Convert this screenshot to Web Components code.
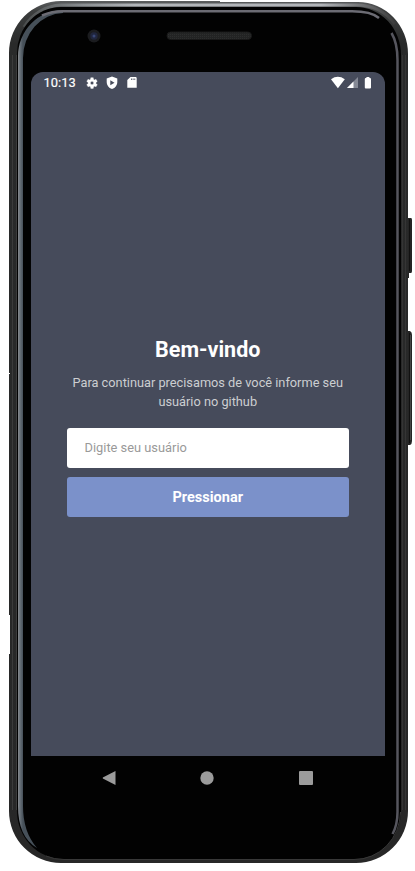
<!DOCTYPE html>
<html lang="pt-BR">
<head>
<meta charset="utf-8">
<title>Bem-vindo</title>
<style>
html,body{margin:0;padding:0;background:#fff;width:415px;height:871px;overflow:hidden}
body{font-family:Roboto,"Noto Sans",sans-serif}
</style>
</head>
<body>
<phone-frame>
  <status-bar slot="screen" time="10:13"></status-bar>
  <welcome-form slot="screen">
    <span slot="title">Bem-vindo</span>
    <span slot="text">Para continuar precisamos de você informe seu<br>usuário no github</span>
    <text-field slot="fields" placeholder="Digite seu usuário"></text-field>
    <action-button slot="fields">Pressionar</action-button>
  </welcome-form>
  <nav-bar slot="nav"></nav-bar>
</phone-frame>
<script>
const define = (name, html, init) => customElements.define(name, class extends HTMLElement {
  constructor() {
    super();
    this.attachShadow({mode: 'open'}).innerHTML = html;
  }
  connectedCallback() { if (init) init(this); }
});

define('phone-frame', `
<style>
:host{display:block;position:relative;width:415px;height:871px}
.shell{position:absolute;left:0;top:0;display:block}
.front{position:relative;display:grid;grid-template-rows:684px 44px;box-sizing:border-box;width:415px;height:871px;padding:72px 30px 0 31px}
.screen{display:flex;flex-direction:column;background:#464b5b;border-radius:12px 12px 0 0;overflow:hidden}
</style>
<svg class="shell" width="415" height="871" viewBox="0 0 415 871">
  <defs>
    <linearGradient id="edge" x1="0" y1="0" x2="0" y2="1">
      <stop offset="0" stop-color="#5c5e5f"/><stop offset=".012" stop-color="#3c3e3e"/><stop offset=".05" stop-color="#292a2a"/><stop offset="1" stop-color="#272727"/>
    </linearGradient>
    <linearGradient id="topshine" x1="0" y1="0" x2="1" y2="0">
      <stop offset="0" stop-color="#4a4d4d"/><stop offset=".16" stop-color="#8b8f92"/><stop offset=".3" stop-color="#b2b5b9"/><stop offset=".8" stop-color="#b2b5b9"/><stop offset="1" stop-color="#3c3c3c"/>
    </linearGradient>
    <linearGradient id="leftshine" x1="18" x2="23" y1="0" y2="0" gradientUnits="userSpaceOnUse">
      <stop offset="0" stop-color="#85888c"/><stop offset=".4" stop-color="#69727a"/><stop offset="1" stop-color="#465059"/>
    </linearGradient>
    <pattern id="mesh" width="2" height="2" patternUnits="userSpaceOnUse"><rect width="2" height="2" fill="#232424"/><rect width="1" height="1" fill="#2d2e2e"/></pattern>
  </defs>
  <path d="M406 218h5q1 0 1 2v51q0 2-1 2h-2v5h-3z" fill="#252525"/>
  <path d="M406 331h4q2 1 2 4v106q0 3-2 4h-4z" fill="#252525"/>
  <path d="M410.500 335v105" stroke="#474747"/>
  <path d="M409.500 219v52M409.500 333v110" stroke="#111"/>
  <path d="M61 1H220V2H358A50 52 0 0 1 408 54V811A52 52 0 0 1 356 863H61A52 52 0 0 1 9 811V53A52 52 0 0 1 61 1Z" fill="url(#edge)"/>
  <path d="M9 373h1v1H9zM9 615h1v39H9z" fill="#fff"/>
  <path d="M12.500 55V810M16.500 55V810" stroke="#3b3b3b" fill="none"/>
  <path d="M402.500 55V810M405.500 55V810" stroke="#353535" fill="none"/>
  <path d="M24 27A46 47 0 0 1 61 5H356Q381 5 395 24" fill="none" stroke="url(#topshine)" stroke-width="3"/>
  <path d="M61 7H356A45 48 0 0 1 401 55V811A46 48 0 0 1 355 859H63A46 48 0 0 1 17 811V53A44 46 0 0 1 61 7Z" fill="#020202"/>
  <path d="M18 56A45 46 0 0 1 63 10V13A41 45 0 0 0 23 58V806Q23 832 37 848Q18 837 18 806Z" fill="url(#leftshine)"/>
  <path d="M42 15.500Q52 11.250 63 11.250H352Q371 11.250 379 18" fill="none" stroke="#6c6c74" stroke-width="2.500"/>
  <path d="M391.500 33Q397.500 43 397.500 60V812Q397.500 825 392.500 834" fill="none" stroke="#56565e" stroke-width="2.500"/>
  <path d="M46 856Q54 859.500 64 859.500H354A46 48 0 0 0 400.500 812" fill="none" stroke="#383838"/>
  <circle cx="94" cy="36" r="6.500" fill="#1b1c1f"/><circle cx="94" cy="36" r="3.700" fill="#20263e"/><circle cx="94" cy="36" r="1.500" fill="#384675"/>
  <rect x="167" y="32" width="84.500" height="7.500" rx="3.700" fill="url(#mesh)" stroke="#191919"/>
</svg>
<div class="front"><div class="screen"><slot name="screen"></slot></div><slot name="nav"></slot></div>`);

define('status-bar', `
<style>
:host{display:flex;justify-content:space-between;height:22px;padding:0 12px;color:#fff}
.clock{flex:none;font-size:12.900px;font-weight:400;-webkit-text-stroke:.15px #fff;line-height:22px;padding-left:.6px}
svg{display:block;flex:none}
</style>
<div class="clock"><span></span></div>
<svg width="289" height="22" viewBox="84 0 289 22" fill="#fff">
  <g transform="translate(84.100 3.700) scale(.61)"><path d="M19.400 13c.1-.7.100-1.300 0-2l2.100-1.600-2-3.500-2.500 1a7 7 0 0 0-1.700-1L15 3.200h-4l-.4 2.700a7 7 0 0 0-1.700 1l-2.500-1-2 3.500L6.600 11a8 8 0 0 0 0 2l-2.200 1.600 2 3.500 2.500-1a7 7 0 0 0 1.700 1l.4 2.700h4l.4-2.700a7 7 0 0 0 1.700-1l2.500 1 2-3.500zM13 14.800a2.800 2.800 0 1 1 0-5.600 2.800 2.800 0 0 1 0 5.600z" fill-rule="evenodd" stroke="#fff" stroke-width=".6"/></g>
  <path fill-rule="evenodd" d="M112 4.500l5.300 2v3.700q0 4.800-5.300 6.800-5.300-2-5.300-6.800V6.500zM110.300 8.200v5l4.200-2.500z"/>
  <path fill-rule="evenodd" d="M130.500 5h5q1.200 0 1.200 1.200v9.600h-9.400V8zM131 6.500v1.500h.8v-1.500zm1.700 0v1.500h.8v-1.500zm1.700 0v1.500h.8v-1.500z"/>
  <path d="M331 7.200q6.900-4.800 13.800 0l-6.900 9z"/>
  <path d="M358 5v11h-11z" fill="#858995"/><path d="M353.500 9.500V16H347z"/>
  <path d="M366.400 5h3v1h.6q1 0 1 1v8.500q0 1-1 1h-4.200q-1 0-1-1V7q0-1 1-1h.6z"/>
</svg>`, el => { el.shadowRoot.querySelector('span').textContent = el.getAttribute('time'); });

define('welcome-form', `
<style>
:host{display:flex;flex-direction:column;padding:242px 36px 0 35.500px;text-align:center}
h1{margin:0;font-size:21.500px;line-height:28px;font-weight:700;color:#fff}
p{margin:9px 0 0;font-size:12.780px;line-height:19px;color:#ccced1;white-space:nowrap;text-align:center}
.fields{display:grid;gap:9px;margin-top:16.700px}
</style>
<h1><slot name="title"></slot></h1><p><slot name="text"></slot></p>
<div class="fields"><slot name="fields"></slot></div>`);

define('text-field', `
<style>
:host{display:block}
input{display:block;box-sizing:border-box;width:100%;height:40px;border:0;border-radius:3px;background:#fff;padding:0 18px 1px;font:12.850px Roboto,sans-serif;color:#333;outline:0}
input::placeholder{color:#999;opacity:1}
</style><input type="text">`, el => { el.shadowRoot.querySelector('input').placeholder = el.getAttribute('placeholder'); });

define('action-button', `
<style>
:host{display:block}
button{display:block;box-sizing:border-box;width:100%;height:40px;border:0;border-radius:3px;background:#7b91ca;color:#fff;font:700 14.500px Roboto,sans-serif;padding:1px 0 0}
</style><button type="button"><slot></slot></button>`);

define('nav-bar', `
<style>
:host{display:flex;justify-content:space-between;align-items:center;padding:0 72.500px 0 71px}
svg{display:block;fill:#9b9b9b}
</style>
<svg width="14" height="16"><path d="M13.500 1v14L.800 8.500V7.500z"/></svg>
<svg width="14" height="14"><circle cx="7" cy="7" r="6.700"/></svg>
<svg width="14" height="14"><rect width="14" height="14" rx="1"/></svg>`);
</script>
</body>
</html>
